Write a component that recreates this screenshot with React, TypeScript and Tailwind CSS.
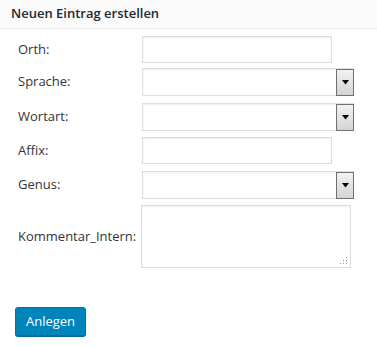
import React from "react";

const labelCls = "w-[124px] shrink-0 text-[13px] text-[#333]";

function SelectBox() {
  return (
    <div className="relative h-[28px] w-[212px] border border-[#dddddd] bg-white shadow-[inset_0_1px_2px_rgba(0,0,0,0.07)]">
      <div className="absolute right-[-1px] top-0 flex h-[27px] w-[18px] items-center justify-center border border-[#707070] bg-gradient-to-b from-[#f2f2f2] to-[#d4d4d4]">
        <svg width="7" height="5" viewBox="0 0 7 5">
          <path d="M0 0 H7 L3.5 4.5 Z" fill="#000" />
        </svg>
      </div>
    </div>
  );
}

function TextBox() {
  return (
    <div className="h-[27px] w-[190px] border border-[#dddddd] bg-white shadow-[inset_0_1px_2px_rgba(0,0,0,0.07)]" />
  );
}

export default function App() {
  return (
    <div
      className="h-[347px] w-[377px] bg-white"
      style={{ fontFamily: '"Open Sans", "Noto Sans", sans-serif' }}
    >
      <div className="flex h-[29px] items-center border-b border-[#eeeeee] bg-[#fafafa] pl-[11px]">
        <span className="text-[13px] font-semibold text-[#23282d]">Neuen Eintrag erstellen</span>
      </div>
      <div className="flex flex-col pl-[18px]">
        <div className="mt-[7px] flex items-center">
          <span className={labelCls}>Orth:</span>
          <TextBox />
        </div>
        <div className="mt-[5px] flex items-center">
          <span className={labelCls}>Sprache:</span>
          <SelectBox />
        </div>
        <div className="mt-[7px] flex items-center">
          <span className={labelCls}>Wortart:</span>
          <SelectBox />
        </div>
        <div className="mt-[6px] flex items-center">
          <span className={labelCls}>Affix:</span>
          <TextBox />
        </div>
        <div className="mt-[7px] flex items-center">
          <span className={labelCls}>Genus:</span>
          <SelectBox />
        </div>
        <div className="mt-[6px] flex items-center">
          <span className="w-[123px] shrink-0 text-[13px] text-[#333]">Kommentar_Intern:</span>
          <div className="relative h-[63px] w-[210px] border border-[#dddddd] bg-white shadow-[inset_0_1px_2px_rgba(0,0,0,0.07)]">
            <svg className="absolute bottom-[2px] right-[2px]" width="8" height="8" viewBox="0 0 8 8">
              <rect x="6" y="0" width="1" height="1" fill="#999" />
              <rect x="3" y="3" width="1" height="1" fill="#999" />
              <rect x="6" y="3" width="1" height="1" fill="#999" />
              <rect x="0" y="6" width="1" height="1" fill="#999" />
              <rect x="3" y="6" width="1" height="1" fill="#999" />
              <rect x="6" y="6" width="1" height="1" fill="#999" />
            </svg>
          </div>
        </div>
      </div>
      <div className="pl-[15px] pt-[39px]">
        <button className="flex h-[29px] w-[71px] items-center justify-center rounded-[3px] border border-[#0073aa] bg-[#0085ba] text-[13px] text-white shadow-[0_1px_0_#006799]">
          Anlegen
        </button>
      </div>
    </div>
  );
}
